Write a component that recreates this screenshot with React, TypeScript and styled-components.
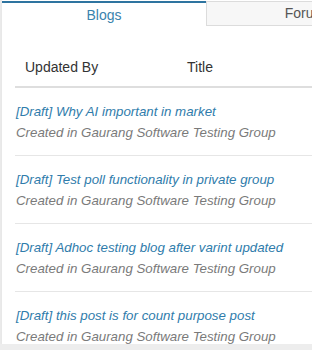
import styled, { createGlobalStyle } from 'styled-components';

const GlobalStyle = createGlobalStyle`
  html, body {
    margin: 0;
    padding: 0;
    background: #ededed;
    font-family: "Liberation Sans", Arial, sans-serif;
  }
`;

const posts = [
  { title: 'Why AI important in market', group: 'Gaurang Software Testing Group' },
  { title: 'Test poll functionality in private group', group: 'Gaurang Software Testing Group' },
  { title: 'Adhoc testing blog after varint updated', group: 'Gaurang Software Testing Group' },
  { title: 'this post is for count purpose post', group: 'Gaurang Software Testing Group' },
];

const Panel = styled.div`
  width: 310px;
  height: 344px;
  margin-left: 2px;
  background: #fff;
  overflow: hidden;
  box-shadow: 0 2px 4px rgba(0, 0, 0, 0.05);
`;

const TabBar = styled.div`
  display: flex;
  align-items: flex-end;
  height: 27px;
  width: 420px;
`;

const Tab = styled.div<{ $active?: boolean }>`
  box-sizing: border-box;
  width: 204px;
  display: flex;
  align-items: center;
  justify-content: center;
  font-size: 14px;
  color: ${(p) => (p.$active ? '#3a83ad' : '#555')};
  background: ${(p) => (p.$active ? '#fff' : '#f7f7f7')};
  height: ${(p) => (p.$active ? '26px' : '25px')};
  border-top: ${(p) => (p.$active ? '2px solid #2e74a0' : '1px solid #dcdcdc')};
  border-left: ${(p) => (p.$active ? 'none' : '1px solid #dcdcdc')};
  border-bottom: ${(p) => (p.$active ? 'none' : '1px solid #dcdcdc')};
  margin-bottom: ${(p) => (p.$active ? '0' : '1px')};
  padding-bottom: 1px;
`;

const Table = styled.div`
  margin-left: 13px;
`;

const HeaderRow = styled.div`
  display: grid;
  grid-template-columns: 162px 1fr;
  height: 61px;
  align-items: end;
  padding: 0 0 9px 10px;
  box-sizing: border-box;
  border-bottom: 2px solid #dedede;
  font-size: 14px;
  line-height: 20px;
  color: #333;
`;

const Row = styled.div`
  padding: 13px 0 12px 1px;
  border-bottom: 1px solid #e6e6e6;
  font-size: 13.3px;
  line-height: 21px;
  font-style: italic;
  white-space: nowrap;
`;

const PostTitle = styled.div`
  color: #2f7cab;
`;

const PostGroup = styled.div`
  color: #7a7a7a;
`;

export default function App() {
  return (
    <>
      <GlobalStyle />
      <Panel>
        <TabBar>
          <Tab $active>Blogs</Tab>
          <Tab>Forums</Tab>
        </TabBar>
        <Table>
          <HeaderRow>
            <span>Updated By</span>
            <span>Title</span>
          </HeaderRow>
          {posts.map((p) => (
            <Row key={p.title}>
              <PostTitle>[Draft] {p.title}</PostTitle>
              <PostGroup>Created in {p.group}</PostGroup>
            </Row>
          ))}
        </Table>
      </Panel>
    </>
  );
}
